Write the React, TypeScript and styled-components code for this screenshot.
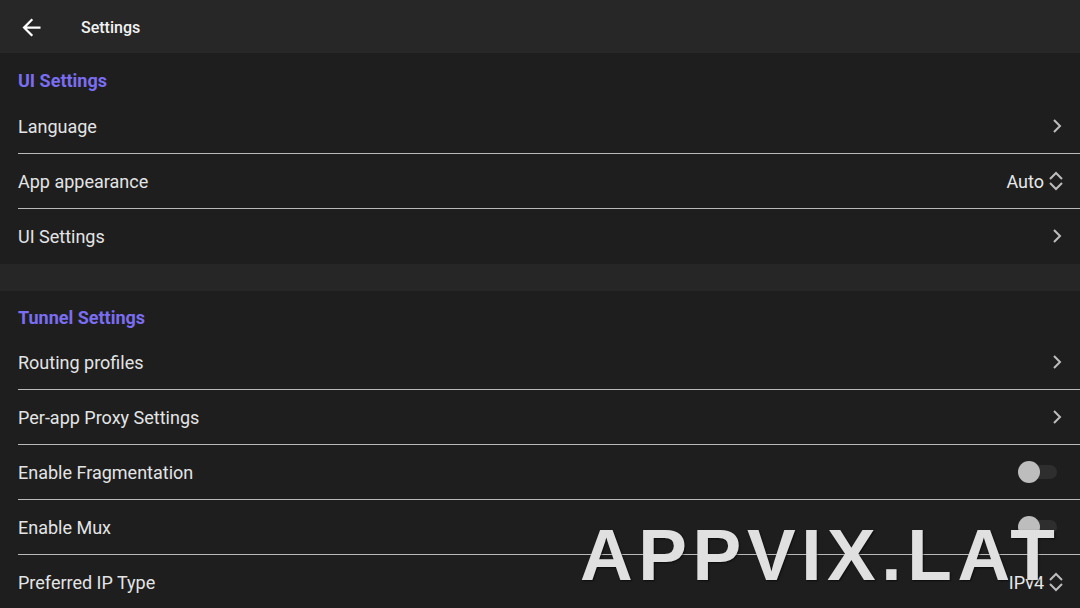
import React from "react";
import styled, { createGlobalStyle } from "styled-components";

const GlobalStyle = createGlobalStyle`
  html, body {
    margin: 0;
    padding: 0;
    background: #1e1e1e;
  }
  body {
    font-family: Roboto, "Noto Sans", Arial, sans-serif;
    -webkit-font-smoothing: antialiased;
  }
  * {
    box-sizing: border-box;
  }
`;

const Screen = styled.div`
  position: relative;
  width: 1080px;
  height: 608px;
  overflow: hidden;
  background: #1e1e1e;
  color: #e2e2e2;
`;

const TopBar = styled.header`
  display: flex;
  align-items: center;
  height: 53px;
  padding: 1px 0 0 18px;
  background: #272727;
`;

const BackButton = styled.button`
  display: flex;
  align-items: center;
  justify-content: center;
  width: 27px;
  height: 27px;
  padding: 0;
  margin: 0;
  border: none;
  background: transparent;
  color: #ffffff;
`;

const Title = styled.h1`
  margin: 0 0 0 36px;
  font-size: 16px;
  font-weight: 500;
  color: #f2f2f2;
`;

const Section = styled.section`
  display: flex;
  flex-direction: column;
`;

const SectionTitle = styled.div<{ $height: number }>`
  display: flex;
  align-items: center;
  height: ${(p) => p.$height}px;
  padding: 8px 0 0 18px;
  font-size: 18px;
  font-weight: 700;
  color: #7b6df0;
`;

const Row = styled.div<{ $last?: boolean }>`
  display: flex;
  align-items: center;
  justify-content: space-between;
  height: 55px;
  margin-left: 18px;
  padding-right: 16px;
  border-bottom: 1px solid ${(p) => (p.$last ? "transparent" : "#b9b9b9")};
`;

const Label = styled.span`
  font-size: 18px;
  color: #e4e4e4;
`;

const Trailing = styled.div`
  display: flex;
  align-items: center;
  gap: 4px;
  color: #bdbdbd;
`;

const Value = styled.span`
  font-size: 18px;
  color: #e8e8e8;
`;

const Spacer = styled.div`
  height: 27px;
  background: #262626;
`;

const Track = styled.div<{ $on?: boolean }>`
  position: relative;
  width: 38px;
  height: 14px;
  margin-right: 7px;
  border-radius: 7px;
  background: ${(p) => (p.$on ? "#5b4fc4" : "#2e2e2e")};
`;

const Thumb = styled.div<{ $on?: boolean }>`
  position: absolute;
  top: -4px;
  left: ${(p) => (p.$on ? "16px" : "-1px")};
  width: 22px;
  height: 22px;
  border-radius: 50%;
  background: ${(p) => (p.$on ? "#7b6df0" : "#bdbdbd")};
`;

const Watermark = styled.div`
  position: absolute;
  left: 580px;
  top: 518px;
  font-family: "Liberation Sans", Arial, sans-serif;
  font-size: 73px;
  font-weight: 700;
  line-height: 1;
  letter-spacing: 5.6px;
  color: #e0e0e0;
  text-shadow: 1px 1px 2px rgba(0, 0, 0, 0.6);
  pointer-events: none;
`;

const ArrowBack = () => (
  <svg width="27" height="27" viewBox="0 0 24 24" fill="currentColor">
    <path d="M20 11H7.83l5.59-5.59L12 4l-8 8 8 8 1.41-1.41L7.83 13H20v-2z" />
  </svg>
);

const ChevronRight = () => (
  <svg width="14" height="16" viewBox="0 0 14 16" fill="none" stroke="currentColor" strokeWidth="2">
    <polyline points="4,2 10,8 4,14" />
  </svg>
);

const UpDown = () => (
  <svg width="16" height="20" viewBox="0 0 16 20" fill="none" stroke="currentColor" strokeWidth="2">
    <polyline points="2,8 8,2 14,8" />
    <polyline points="2,12 8,18 14,12" />
  </svg>
);

const Toggle = ({ on }: { on?: boolean }) => (
  <Track $on={on}>
    <Thumb $on={on} />
  </Track>
);

type Item = {
  label: string;
  kind: "link" | "select" | "toggle";
  value?: string;
};

const uiItems: Item[] = [
  { label: "Language", kind: "link" },
  { label: "App appearance", kind: "select", value: "Auto" },
  { label: "UI Settings", kind: "link" },
];

const tunnelItems: Item[] = [
  { label: "Routing profiles", kind: "link" },
  { label: "Per-app Proxy Settings", kind: "link" },
  { label: "Enable Fragmentation", kind: "toggle" },
  { label: "Enable Mux", kind: "toggle" },
  { label: "Preferred IP Type", kind: "select", value: "IPv4" },
];

const SettingRow = ({ item, last }: { item: Item; last?: boolean }) => (
  <Row $last={last}>
    <Label>{item.label}</Label>
    {item.kind === "link" && (
      <Trailing>
        <ChevronRight />
      </Trailing>
    )}
    {item.kind === "select" && (
      <Trailing>
        <Value>{item.value}</Value>
        <UpDown />
      </Trailing>
    )}
    {item.kind === "toggle" && <Toggle />}
  </Row>
);

export default function App() {
  return (
    <Screen>
      <GlobalStyle />
      <TopBar>
        <BackButton>
          <ArrowBack />
        </BackButton>
        <Title>Settings</Title>
      </TopBar>

      <Section>
        <SectionTitle $height={46}>UI Settings</SectionTitle>
        {uiItems.map((it, i) => (
          <SettingRow key={it.label} item={it} last={i === uiItems.length - 1} />
        ))}
      </Section>

      <Spacer />

      <Section>
        <SectionTitle $height={44}>Tunnel Settings</SectionTitle>
        {tunnelItems.map((it, i) => (
          <SettingRow key={it.label} item={it} last={i === tunnelItems.length - 1} />
        ))}
      </Section>

      <Watermark>APPVIX.LAT</Watermark>
    </Screen>
  );
}
